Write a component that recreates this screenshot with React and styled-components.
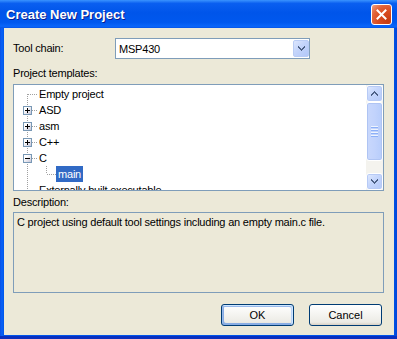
import React from 'react';
import styled, { createGlobalStyle, css } from 'styled-components';

const beige = '#ECE9D8';
const fieldBorder = '#7F9DB9';
const uiFont = `"Liberation Sans", Arial, sans-serif`;
const dots = '#A0A0A0';

const GlobalStyle = createGlobalStyle`
  html, body { margin: 0; padding: 0; background: #fff; }
  body { font-family: ${uiFont}; font-size: 11px; color: #000; letter-spacing: -0.2px; }
`;

const Window = styled.div`
  width: 397px;
  height: 339px;
  box-sizing: border-box;
  display: flex;
  flex-direction: column;
  padding: 0 3px 4px 4px;
  background: linear-gradient(to right, #0A4FE6 0, #0862F7 2px, #0055EA 4px, #0055EA 393px, #0046D8 397px);
  box-shadow: inset 0 -3px 0 #0A2FBE;
`;

const TitleBar = styled.div`
  flex: none;
  height: 28px;
  margin: 0 -3px 0 -4px;
  padding: 0 5px 0 6px;
  display: flex;
  align-items: center;
  justify-content: space-between;
  background: linear-gradient(to bottom, #3A93FF 0%, #0A5FF0 12%, #0055EA 45%, #0058EE 80%, #0A66FA 94%, #0653E6 100%);
`;

const Title = styled.span`
  font: bold 13px ${uiFont};
  letter-spacing: 0;
  color: #fff;
  text-shadow: 1px 1px 0 #0A1E8C;
  margin-top: 1px;
`;

const CloseButton = styled.button`
  width: 21px;
  height: 21px;
  padding: 0;
  box-sizing: border-box;
  border: 1px solid #fff;
  border-radius: 3px;
  display: flex;
  align-items: center;
  justify-content: center;
  background: radial-gradient(circle at 85% 85%, #C63C12 0%, #DA4D22 45%, #E2643A 70%, #EFA284 100%);
`;

const Client = styled.div`
  flex: 1;
  background: ${beige};
  display: flex;
  flex-direction: column;
  padding: 10px 10px 0 9px;
`;

const FieldRow = styled.div`
  display: flex;
  align-items: center;
  height: 21px;
`;

const Label = styled.div`
  line-height: 13px;
  width: ${p => (p.$width ? `${p.$width}px` : 'auto')};
  margin-top: ${p => p.$top || 0}px;
  flex: none;
`;

const Combo = styled.div`
  width: 195px;
  height: 21px;
  box-sizing: border-box;
  border: 1px solid ${fieldBorder};
  background: #fff;
  display: flex;
  align-items: center;
  justify-content: space-between;
  padding-left: 3px;
`;

const ArrowButton = styled.div`
  width: 16px;
  height: 17px;
  margin: 1px 0 1px 0;
  box-sizing: border-box;
  border: 1px solid #B9CCF5;
  border-radius: 2px;
  background: linear-gradient(135deg, #DCE6FD 0%, #C3D4FB 45%, #B2C7F8 100%);
  display: flex;
  align-items: center;
  justify-content: center;
`;

const TreeBox = styled.div`
  margin-top: 4px;
  height: 107px;
  box-sizing: border-box;
  border: 1px solid ${fieldBorder};
  background: #fff;
  display: flex;
`;

const TreeList = styled.div`
  flex: 1;
  overflow: hidden;
  padding: 1px 0 0 4px;
`;

const Row = styled.div`
  display: flex;
  height: 16px;
`;

const vertical = css`
  content: '';
  position: absolute;
  left: 9px;
  width: 1px;
  background: repeating-linear-gradient(to bottom, ${dots} 0 1px, transparent 1px 2px);
`;

const Guide = styled.span`
  width: 19px;
  flex: none;
  position: relative;
  ${p => p.$line && css`
    &::before { ${vertical} top: 0; bottom: 0; }
  `}
`;

const Connector = styled.span`
  width: 19px;
  flex: none;
  position: relative;
  &::before {
    ${vertical}
    top: ${p => (p.$up ? 0 : 8)}px;
    bottom: ${p => (p.$down ? 0 : 8)}px;
  }
  &::after {
    content: '';
    position: absolute;
    left: 10px;
    top: 8px;
    width: 9px;
    height: 1px;
    background: repeating-linear-gradient(to right, ${dots} 0 1px, transparent 1px 2px);
  }
`;

const Expander = styled.span`
  position: absolute;
  left: 5px;
  top: 4px;
  width: 9px;
  height: 9px;
  box-sizing: border-box;
  border: 1px solid #7898B5;
  background: linear-gradient(135deg, #fff 30%, #C6C5D7 100%);
  z-index: 1;
  display: flex;
`;

const ItemText = styled.span`
  line-height: 16px;
  padding: 0 2px;
  white-space: nowrap;
  background: ${p => (p.$selected ? '#316AC5' : 'transparent')};
  color: ${p => (p.$selected ? '#fff' : '#000')};
`;

const ScrollBar = styled.div`
  width: 17px;
  flex: none;
  display: flex;
  flex-direction: column;
  background: #F4F3EE;
`;

const ScrollButton = styled.div`
  height: 17px;
  flex: none;
  box-sizing: border-box;
  border: 1px solid #fff;
  border-radius: 3px;
  box-shadow: inset 0 0 0 1px #B7CAF5;
  background: linear-gradient(135deg, #E1EAFE 0%, #C5D6FC 45%, #B4C9F8 100%);
  display: flex;
  align-items: center;
  justify-content: center;
`;

const Track = styled.div`
  flex: 1;
  display: flex;
  flex-direction: column;
`;

const Thumb = styled.div`
  height: 59px;
  box-sizing: border-box;
  border: 1px solid #fff;
  border-radius: 3px;
  box-shadow: inset 0 0 0 1px #AFC4F3;
  background: linear-gradient(to right, #C9D8FC 0%, #C2D3FC 50%, #B7CDFB 100%);
  display: flex;
  flex-direction: column;
  align-items: center;
  justify-content: center;
  gap: 1px;
`;

const Grip = styled.span`
  width: 7px;
  height: 1px;
  background: #EEF4FE;
  border-bottom: 1px solid #8CB0F8;
`;

const DescBox = styled.div`
  margin-top: 3px;
  height: 81px;
  box-sizing: border-box;
  border: 1px solid ${fieldBorder};
  padding: 3px 3px;
  line-height: 13px;
`;

const ButtonRow = styled.div`
  margin-top: 11px;
  display: flex;
  justify-content: flex-end;
  gap: 15px;
  padding-right: 2px;
`;

const DialogButton = styled.button`
  width: 73px;
  height: 22px;
  box-sizing: border-box;
  padding: 0;
  border: 1px solid #003C74;
  border-radius: 3px;
  background: linear-gradient(180deg, #fff, #ECEBE5 86%, #D8D0C4);
  font: 11px ${uiFont};
  color: #000;
  ${p => p.$default && css`
    box-shadow: inset -1px 1px #CEE7FF, inset 1px 2px #98B8EA, inset -2px 2px #BCD4F6,
      inset 1px -1px #89ADE4, inset 2px -2px #89ADE4;
  `}
`;

// pixel chevron used on the combo and scroll buttons
const Chevron = ({ up }) => (
  <svg width="7" height="5" viewBox="0 0 7 5" shapeRendering="crispEdges"
    style={up ? { transform: 'scaleY(-1)' } : undefined}>
    <path d="M0 0h1v1h1v1h1v1h1V2h1V1h1V0h1v2H6v1H5v1H4v1H3V4H2V3H1V2H0z" fill="#4D6185" />
  </svg>
);

const PlusMinus = ({ open }) => (
  <svg width="7" height="7" viewBox="0 0 7 7" shapeRendering="crispEdges">
    <rect x="1" y="3" width="5" height="1" fill="#000" />
    {!open && <rect x="3" y="1" width="1" height="5" fill="#000" />}
  </svg>
);

const templates = [
  { label: 'Empty project', up: false, down: true },
  { label: 'ASD', up: true, down: true, expander: 'closed' },
  { label: 'asm', up: true, down: true, expander: 'closed' },
  { label: 'C++', up: true, down: true, expander: 'closed' },
  { label: 'C', up: true, down: true, expander: 'open' },
  { label: 'main', guides: [true], up: true, down: false, selected: true },
  { label: 'Externally built executable', up: true, down: true },
];

export default function App() {
  return (
    <>
      <GlobalStyle />
      <Window>
        <TitleBar>
          <Title>Create New Project</Title>
          <CloseButton aria-label="Close">
            <svg width="11" height="11" viewBox="0 0 11 11">
              <path d="M1.5 1.5 L9.5 9.5 M9.5 1.5 L1.5 9.5" stroke="#fff" strokeWidth="2" strokeLinecap="square" />
            </svg>
          </CloseButton>
        </TitleBar>
        <Client>
          <FieldRow>
            <Label $width={102}>Tool chain:</Label>
            <Combo>
              <span>MSP430</span>
              <ArrowButton><Chevron /></ArrowButton>
            </Combo>
          </FieldRow>
          <Label $top={8}>Project templates:</Label>
          <TreeBox>
            <TreeList>
              {templates.map(item => (
                <Row key={item.label}>
                  {(item.guides || []).map((line, i) => <Guide key={i} $line={line} />)}
                  <Connector $up={item.up} $down={item.down}>
                    {item.expander && (
                      <Expander><PlusMinus open={item.expander === 'open'} /></Expander>
                    )}
                  </Connector>
                  <ItemText $selected={item.selected}>{item.label}</ItemText>
                </Row>
              ))}
            </TreeList>
            <ScrollBar>
              <ScrollButton><Chevron up /></ScrollButton>
              <Track>
                <Thumb>
                  <Grip /><Grip /><Grip /><Grip />
                </Thumb>
              </Track>
              <ScrollButton><Chevron /></ScrollButton>
            </ScrollBar>
          </TreeBox>
          <Label $top={5}>Description:</Label>
          <DescBox>C project using default tool settings including an empty main.c file.</DescBox>
          <ButtonRow>
            <DialogButton $default>OK</DialogButton>
            <DialogButton>Cancel</DialogButton>
          </ButtonRow>
        </Client>
      </Window>
    </>
  );
}
